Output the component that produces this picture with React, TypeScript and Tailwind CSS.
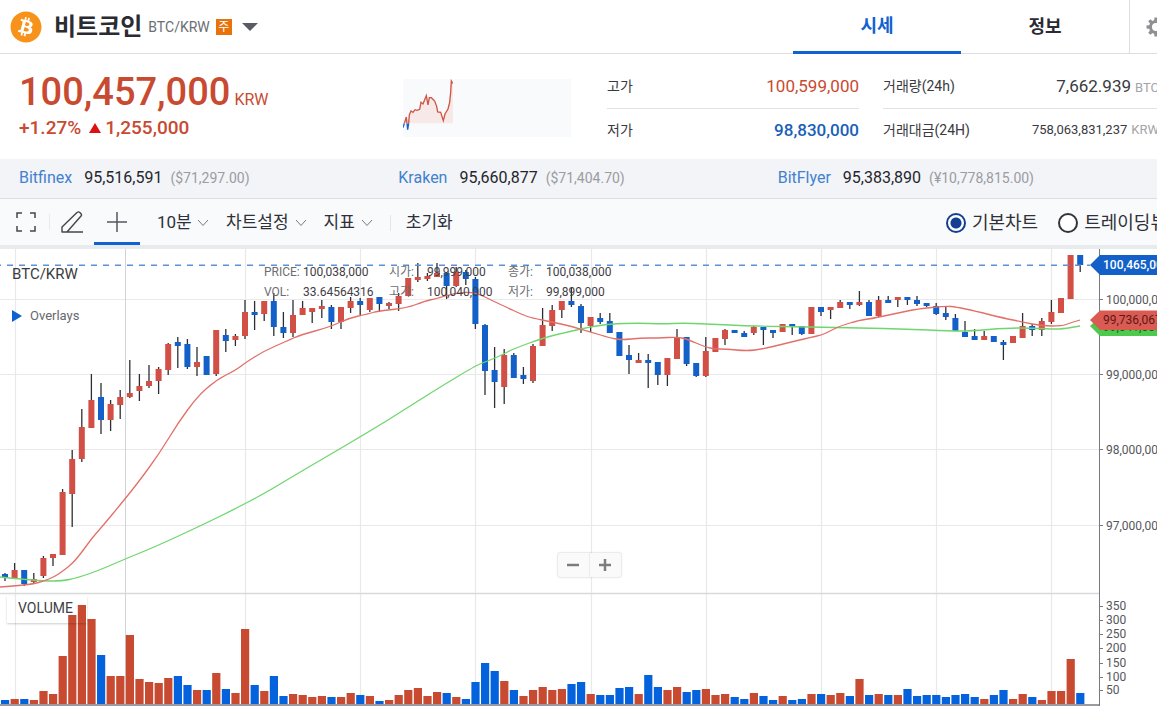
import { Fragment } from "react";
import { FaBitcoin } from "react-icons/fa";

// [rising, high, open/close top, open/close bottom, low, volume top, volume rising override]
type Candle = [number, number, number, number, number, number, number?];

const CANDLES: Candle[] = [
  [0, 573, 574, 578, 581, 700], [1, 563, 570, 578, 579, 699], [0, 570, 570, 584, 586, 699], [1, 573, 579, 582, 583, 700],
  [1, 556, 558, 576, 578, 691], [1, 554, 554, 558, 566, 694], [1, 489, 492, 555, 555, 656], [1, 450, 459, 494, 527, 615],
  [1, 409, 427, 459, 462, 605], [1, 374, 400, 428, 428, 619], [0, 383, 397, 420, 434, 655], [1, 400, 404, 420, 431, 676],
  [1, 390, 397, 405, 419, 676], [1, 360, 393, 397, 398, 635], [1, 374, 386, 391, 401, 679], [1, 365, 381, 386, 388, 682],
  [1, 367, 369, 381, 394, 683], [1, 343, 344, 370, 375, 678], [0, 337, 342, 346, 368, 676], [0, 339, 344, 367, 369, 685],
  [1, 347, 362, 367, 376, 690], [0, 356, 356, 375, 375, 690], [1, 330, 330, 374, 376, 673], [0, 329, 335, 341, 352, 689],
  [1, 334, 336, 340, 346, 693], [1, 300, 312, 336, 339, 629], [0, 301, 312, 315, 330, 685], [1, 301, 301, 314, 321, 691],
  [0, 293, 301, 327, 336, 676], [0, 312, 327, 333, 338, 696], [1, 300, 315, 333, 337, 694], [1, 301, 308, 315, 315, 695],
  [1, 308, 308, 312, 323, 697], [1, 300, 306, 309, 318, 696], [0, 305, 307, 322, 329, 697], [1, 307, 307, 322, 329, 697],
  [1, 297, 301, 308, 313, 693], [0, 298, 301, 305, 315, 695], [1, 298, 298, 310, 312, 696], [0, 297, 297, 304, 312, 701],
  [1, 302, 303, 306, 309, 700], [1, 293, 296, 304, 311, 695], [1, 278, 278, 296, 296, 690], [1, 263, 277, 280, 282, 688],
  [1, 273, 276, 279, 281, 696], [1, 263, 273, 277, 277, 692], [0, 272, 273, 286, 299, 693], [1, 267, 272, 286, 287, 697],
  [0, 270, 272, 279, 285, 699], [0, 277, 279, 324, 329, 682], [0, 324, 325, 371, 395, 663], [0, 347, 370, 382, 408, 671],
  [1, 349, 355, 387, 404, 681], [0, 353, 355, 378, 378, 690], [0, 367, 375, 379, 384, 696, 1], [1, 344, 346, 381, 383, 690],
  [1, 308, 325, 346, 346, 687], [1, 305, 310, 326, 331, 690], [1, 301, 301, 310, 318, 689], [0, 288, 301, 305, 307, 684],
  [0, 304, 306, 323, 333, 682], [1, 317, 317, 326, 332, 694], [0, 313, 318, 322, 324, 695], [0, 313, 321, 333, 333, 695],
  [0, 332, 332, 356, 356, 688], [0, 345, 355, 360, 374, 687], [1, 353, 360, 363, 363, 694], [0, 354, 360, 363, 388, 675],
  [0, 362, 362, 375, 385, 687], [1, 358, 358, 375, 386, 690], [1, 329, 337, 359, 359, 687], [0, 337, 337, 364, 366, 692],
  [0, 363, 363, 376, 377, 690], [1, 337, 351, 376, 377, 689], [1, 338, 338, 352, 352, 695], [1, 329, 330, 339, 345, 694],
  [0, 330, 330, 333, 333, 697], [0, 331, 333, 337, 337, 699], [1, 326, 327, 333, 335, 693], [0, 327, 327, 330, 345, 696],
  [0, 330, 330, 333, 338, 700], [1, 324, 324, 332, 332, 696], [0, 324, 324, 326, 335, 700], [0, 326, 326, 334, 335, 699],
  [1, 307, 307, 334, 334, 694], [0, 307, 307, 312, 316, 694], [1, 307, 307, 310, 319, 695], [1, 300, 302, 308, 308, 693],
  [0, 302, 302, 305, 309, 696], [1, 291, 302, 305, 306, 679], [0, 300, 302, 316, 316, 695], [1, 296, 300, 316, 317, 694],
  [0, 296, 300, 303, 303, 695], [1, 297, 297, 300, 307, 695], [0, 297, 297, 300, 305, 689], [0, 296, 300, 304, 306, 696],
  [0, 303, 303, 306, 307, 695], [0, 303, 306, 314, 315, 695], [0, 307, 313, 317, 320, 697], [0, 314, 318, 331, 331, 695],
  [0, 321, 332, 337, 337, 694], [0, 329, 336, 340, 340, 697], [1, 331, 336, 340, 340, 699], [0, 336, 336, 342, 342, 695],
  [0, 340, 342, 345, 360, 690], [1, 336, 336, 343, 343, 699], [1, 313, 326, 338, 338, 694], [0, 324, 326, 330, 336, 697],
  [1, 318, 321, 330, 336, 700], [1, 300, 312, 322, 324, 691], [1, 298, 298, 313, 313, 691], [1, 255, 255, 299, 299, 659],
  [0, 255, 255, 265, 272, 693],
];

const SHORT_AVERAGE =
  "0,587 14,586 33,584 44,581 54,577 63,571 73,563 82,552 92,538 101,528 125,499 140,480 159,454 178,423 197,397 216,380 236,370 245,363 264,351 287,341 300,335 330,327 349,318 368,314 378,311 407,308 425,301 435,299 455,293 475,292 495,302 504,306 523,315 532,318 552,322 570,326 591,332 610,338 622,340 640,338 658,338 677,337 687,339 705,347 715,349 725,349 747,351 763,349 783,344 812,337 822,335 830,331 840,326 860,320 870,319 898,313 917,309 946,306 956,307 975,311 1003,318 1023,322 1042,326 1062,326 1070,323 1080,320";
const LONG_AVERAGE =
  "0,577 20,579 45,581 62,581 77,578 100,570 125,559 157,546 200,526 233,510 267,492 290,478 372,430 407,408 437,389 475,366 485,362 500,356 513,349 543,338 563,333 590,327 610,324 638,323 663,324 683,323 705,324 730,325 750,326 812,327 860,328 907,329 950,331 970,331 1007,328 1030,328 1052,329 1062,329 1080,326";

// Rounds the corners of a polyline by running quadratic curves between segment midpoints.
function smooth(points: string) {
  const p = points.split(" ").map((s) => s.split(",").map(Number));
  const end = p[p.length - 1];
  const curves = p.slice(1, -1).map(([x, y], i) => {
    const [nx, ny] = p[i + 2];
    return `Q${x} ${y} ${(x + nx) / 2} ${(y + ny) / 2}`;
  });
  return `M${p[0][0]} ${p[0][1]}${curves.join("")}L${end[0]} ${end[1]}`;
}

const COLUMN_LINES = [15, 245, 360, 475, 591, 706, 821, 936, 1051];
const ROW_LINES = [300, 375, 450, 526];

const PRICE_TICKS: [number, string][] = [
  [300, "100,000,000"],
  [375, "99,000,000"],
  [450, "98,000,000"],
  [526, "97,000,000"],
];
const VOLUME_TICKS: [number, string][] = [
  [606, "350"], [620, "300"], [634, "250"], [648, "200"], [663, "150"], [677, "100"], [690, "50"],
];

const EXCHANGES = [
  { name: "Bitfinex", price: "95,516,591", local: "($71,297.00)" },
  { name: "Kraken", price: "95,660,877", local: "($71,404.70)" },
  { name: "BitFlyer", price: "95,383,890", local: "(¥10,778,815.00)" },
];

const TEETH = [0, 45, 90, 135, 180, 225, 270, 315];

function Header() {
  return (
    <header className="flex h-[54px] border-b border-[#dcdee1] bg-white">
      <div className="flex flex-1 items-center pl-[10px]">
        <FaBitcoin className="size-8 text-[#f7931a]" />
        <h1 className="ml-3 text-2xl font-bold text-[#2b2b33]">비트코인</h1>
        <span className="ml-1.5 text-sm text-[#6b6e73]">BTC/KRW</span>
        <span className="ml-1.5 flex size-4 items-center justify-center bg-[#e8720c] text-xs text-white">주</span>
        <button type="button" aria-label="코인 선택" className="ml-2.5">
          <svg className="h-2 w-4 fill-[#595c64]" viewBox="0 0 16 8">
            <path d="M0 0h16L8 8z" />
          </svg>
        </button>
      </div>
      <nav className="flex text-lg font-bold">
        <a href="#price" className="-mb-px flex w-[168px] items-center justify-center border-b-3 border-[#0f62cf] text-[#0f62cf]">
          시세
        </a>
        <a href="#info" className="flex w-[168px] items-center justify-center text-[#2b2b33]">
          정보
        </a>
      </nav>
      <button type="button" aria-label="설정" className="flex w-7 items-center overflow-hidden border-l border-[#dcdee1] pl-4">
        <svg className="size-5 shrink-0" viewBox="0 0 20 20">
          <circle cx="10" cy="10" r="5.5" fill="none" stroke="#8f9094" strokeWidth="3" />
          {TEETH.map((a) => (
            <path key={a} d="M8 4.500L8.500 .500h3L12 4.500z" fill="#8f9094" transform={`rotate(${a} 10 10)`} />
          ))}
        </svg>
      </button>
    </header>
  );
}

function Sparkline() {
  return (
    <svg className="h-[58px] w-[168px] shrink-0 bg-[#f9fafc]" viewBox="0 0 504 174">
      <path
        d="M4 133L10 114 17 133 19 108 24 96 30 100 36 92 42 94 50 91 54 70 60 75 70 50 75 78 79 56 85 56 95 66 101 82 104 99 113 100 121 125 126 105 135 90 140 70 143 40 145 6 150 12V133z"
        fill="#f7e9e7"
      />
      <path d="M0 146L4 133M12 133L14 152 17 133" fill="none" stroke="#0f62cf" strokeWidth="4" />
      <path
        d="M4 133L10 114 12 133M17 133L19 108 24 96 30 100 36 92 42 94 50 91 54 70 60 75 65 62 70 50 75 78 79 56 85 56 95 66 101 82 104 99 113 100 121 125 126 105 135 90 140 70 143 40 145 6 149 13"
        fill="none"
        stroke="#cf5544"
        strokeWidth="4"
      />
    </svg>
  );
}

function Summary() {
  return (
    <section className="flex h-[105px] bg-white pl-[19px]">
      <div className="w-96 shrink-0 pt-4 text-[#c84a31]">
        <p className="flex items-baseline gap-1 leading-11">
          <strong className="text-[38px] font-medium">100,457,000</strong>
          <span className="text-base">KRW</span>
        </p>
        <p className="flex items-center gap-2 text-[19px] leading-7 font-medium">
          <span>+1.27%</span>
          <svg className="h-[10px] w-3 fill-[#dd1111]" viewBox="0 0 12 10">
            <path d="M6 0l6 10H0z" />
          </svg>
          <span className="-ml-1">1,255,000</span>
        </p>
      </div>
      <div className="pt-[25px]">
        <Sparkline />
      </div>
      <dl className="-mr-0.5 ml-9 grid flex-1 grid-cols-[minmax(0,21fr)_minmax(0,23fr)] content-start gap-x-6 pt-[10px] text-sm whitespace-nowrap text-[#3a3a40]">
        <div className="flex h-[45px] items-center justify-between border-b border-[#e1e3e6]">
          <dt>고가</dt>
          <dd className="text-[17px] text-[#c84a31]">100,599,000</dd>
        </div>
        <div className="flex h-[45px] items-center justify-between border-b border-[#e1e3e6]">
          <dt>거래량(24h)</dt>
          <dd className="flex items-baseline gap-1 text-[17px]">
            7,662.939 <span className="text-[13px] text-[#a2a4a8]">BTC</span>
          </dd>
        </div>
        <div className="flex h-[42px] items-center justify-between">
          <dt>저가</dt>
          <dd className="text-[17px] font-medium text-[#1a5fb8]">98,830,000</dd>
        </div>
        <div className="flex h-[42px] items-center justify-between">
          <dt>거래대금(24H)</dt>
          <dd className="flex items-baseline gap-1 text-[13px]">
            758,063,831,237 <span className="text-[13px] text-[#a2a4a8]">KRW</span>
          </dd>
        </div>
      </dl>
    </section>
  );
}

function Exchanges() {
  return (
    <ul className="grid h-10 grid-cols-3 border-b border-[#dcdee1] bg-[#f2f4f8] pb-0.5 pl-[19px] whitespace-nowrap">
      {EXCHANGES.map((e) => (
        <li key={e.name} className="-mr-1 flex items-center">
          <a href={`#${e.name}`} className="text-base text-[#4381cf]">
            {e.name}
          </a>
          <span className="ml-3 text-base text-[#25262b]">{e.price}</span>
          <span className="ml-2 text-sm text-[#9b9ca1]">{e.local}</span>
        </li>
      ))}
    </ul>
  );
}

function Chevron() {
  return (
    <svg className="h-2 w-3" viewBox="0 0 12 8" fill="none" stroke="#77797f">
      <path d="M1 1l5 5.500L11 1" />
    </svg>
  );
}

function Toolbar() {
  return (
    <div className="flex h-[50px] items-stretch border-b-4 border-[#e8ebee] bg-[#f8fafc] text-[17px] whitespace-nowrap text-[#303138]">
      <button type="button" aria-label="전체화면" className="flex w-[50px] items-center justify-between pl-4">
        <svg className="size-5" viewBox="0 0 20 20" fill="none" stroke="#45464d" strokeWidth="1.500">
          <path d="M1 6V1h5M14 1h5v5M19 14v5h-5M6 19H1v-5" />
        </svg>
        <span className="h-4 w-px bg-[#e8eaed]" />
      </button>
      <button type="button" aria-label="그리기" className="flex w-11 items-center justify-center">
        <svg className="size-[22px]" viewBox="0 0 22 22" fill="none" stroke="#45464d" strokeWidth="1.400" strokeLinejoin="round">
          <path d="M1 21v-5L16 1.500c1-.800 2-.800 2.800 0l1 1c.900.900.900 1.900 0 2.800L6 21zM6 21h16" />
        </svg>
      </button>
      <button
        type="button"
        aria-label="십자선"
        className="flex w-[46px] items-center justify-center border-b-3 border-[#0f62cf] pt-[3px]"
      >
        <svg className="size-5" viewBox="0 0 20 20" fill="none" stroke="#55575d" strokeWidth="1.500">
          <path d="M10 0v20M0 10h20" />
        </svg>
      </button>
      <div className="flex items-center gap-[17px] pt-0.5 pl-[17px]">
        <label className="relative flex items-center">
          <select aria-label="봉 간격" className="w-[52px] appearance-none bg-transparent">
            <option>10분</option>
          </select>
          <span className="pointer-events-none absolute right-0">
            <Chevron />
          </span>
        </label>
        <button type="button" className="flex items-center gap-1.5">
          차트설정
          <Chevron />
        </button>
        <button type="button" className="flex items-center gap-1.5">
          지표
          <Chevron />
        </button>
        <span className="h-4 w-px bg-[#e3e5e8]" />
        <button type="button" className="-ml-0.5">
          초기화
        </button>
      </div>
      <fieldset className="-mr-2.5 ml-auto flex items-center gap-5 pt-0.5 text-lg">
        <label className="flex items-center gap-1.5">
          <input
            type="radio"
            name="chart"
            defaultChecked
            className="size-5 appearance-none rounded-full border-2 border-[#33343a] bg-white checked:border-[#123f94] checked:bg-[radial-gradient(circle,#123f94_5px,#fff_6px)]"
          />
          기본차트
        </label>
        <label className="flex items-center gap-1.5">
          <input
            type="radio"
            name="chart"
            className="size-5 appearance-none rounded-full border-2 border-[#33343a] bg-white checked:border-[#123f94] checked:bg-[radial-gradient(circle,#123f94_5px,#fff_6px)]"
          />
          트레이딩뷰
        </label>
      </fieldset>
    </div>
  );
}

function Plot() {
  return (
    <svg className="block h-[457px] w-full" viewBox="0 249 1099 457" preserveAspectRatio="none">
      <g stroke="#e9e9ec" strokeWidth="1.200">
        {COLUMN_LINES.map((x) => (
          <path key={x} d={`M${x + 0.5} 249V704`} />
        ))}
        {ROW_LINES.map((y) => (
          <path key={y} d={`M0 ${y - 0.5}H1099`} />
        ))}
      </g>
      <path d="M125.500 249V704" stroke="#d2d3d6" />
      <path d="M0 593.500H1099" stroke="#d8d9dc" strokeWidth="1.500" />
      {CANDLES.map(([up, high, top, bottom, low, vol, volUp], i) => {
        const x = 5 + i * 9.6;
        return (
          <g key={i}>
            <path d={`M${x} ${high}V${low}`} stroke="#2c2f36" strokeWidth="1.300" />
            <rect x={x - 3} y={top} width="6" height={bottom - top} fill={up ? "#d24f45" : "#1260c8"} />
            <rect x={x - 4} y={vol} width="8.200" height={704 - vol} fill={volUp ?? up ? "#c84a31" : "#0462dd"} />
          </g>
        );
      })}
      <path d={smooth(LONG_AVERAGE)} fill="none" stroke="#6fd66f" strokeWidth="1.300" />
      <path d={smooth(SHORT_AVERAGE)} fill="none" stroke="#e27069" strokeWidth="1.300" />
      <path d="M-5 265.200H1090" stroke="#5c8fd6" strokeWidth="1.500" strokeDasharray="6 6" />
      <path d="M0 705H1099" stroke="#9a9ba0" strokeWidth="2" />
    </svg>
  );
}

function Axis() {
  return (
    <svg className="block h-[457px] w-[58px] shrink-0 overflow-visible text-xs" viewBox="0 249 58 457" fill="#55575c">
      <path d="M.500 249V706" stroke="#77797e" />
      {PRICE_TICKS.map(([y, label]) => (
        <Fragment key={label}>
          <path d={`M0 ${y - 0.5}h4`} stroke="#77797e" />
          <text x="7" y={y + 4}>{label}</text>
        </Fragment>
      ))}
      {VOLUME_TICKS.map(([y, label]) => (
        <Fragment key={label}>
          <path d={`M0 ${y + 0.5}h4`} stroke="#77797e" />
          <text x="7" y={y + 4}>{label}</text>
        </Fragment>
      ))}
      <path d="M-9 326L1 317H60V336H1z" fill="#4dc94d" />
      <text x="4" y="331" fill="#1d5a1d">99,641,000</text>
      <path d="M-9 320L1 310.500H60V330H1z" fill="#d95b53" />
      <text x="4" y="324" fill="#5f1815">99,736,067</text>
      <path d="M-9 265L1 255H60V275H1z" fill="#1260c8" />
      <text x="4" y="269" fill="#fff" fontWeight="500">100,465,000</text>
    </svg>
  );
}

const READOUT = [
  ["PRICE:", "100,038,000", "시가:", "99,999,000", "종가:", "100,038,000"],
  ["VOL:", "33.64564316", "고가:", "100,040,000", "저가:", "99,899,000"],
];

function Chart() {
  return (
    <section className="relative flex bg-white">
      <div className="min-w-0 flex-1">
        <Plot />
      </div>
      <Axis />
      <div className="absolute top-[15px] left-3">
        <h2 className="text-[15px] leading-5 text-[#3a3b40]">BTC/KRW</h2>
        <button type="button" className="mt-[22px] flex items-center gap-2 text-[13px] leading-5 text-[#66686d]">
          <svg className="h-3 w-2.5 fill-[#0f62cf]" viewBox="0 0 10 12">
            <path d="M0 0l10 6-10 6z" />
          </svg>
          Overlays
        </button>
      </div>
      <dl className="absolute top-[13px] left-[264px] grid grid-cols-[39px_86px_38px_81px_38px_auto] text-xs leading-5 whitespace-nowrap">
        {READOUT.flat().map((t, i) =>
          i % 2 === 0 ? (
            <dt key={i} className="text-[#6b6d72]">{t}</dt>
          ) : (
            <dd key={i} className="text-[#3f4046]">{t}</dd>
          ),
        )}
      </dl>
      <div className="absolute top-[304px] left-1/2 -ml-[21px] flex h-6 divide-x divide-[#ececee] rounded-xs bg-[#fafafa] shadow-[0_0_2px_rgba(0,0,0,0.3)]">
        <button type="button" aria-label="축소" className="flex w-8 items-center justify-center">
          <svg className="size-3" viewBox="0 0 12 12" stroke="#7b7c80" strokeWidth="2.500">
            <path d="M0 6h12" />
          </svg>
        </button>
        <button type="button" aria-label="확대" className="flex w-[31px] items-center justify-center">
          <svg className="size-3" viewBox="0 0 12 12" stroke="#7b7c80" strokeWidth="2.500">
            <path d="M0 6h12M6 0v12" />
          </svg>
        </button>
      </div>
      <h3 className="absolute top-[347px] left-[7px] h-[27px] w-20 pl-[11px] text-sm leading-6 text-[#3f4046] shadow-[0_1px_2px_rgba(0,0,0,0.2)]">
        VOLUME
      </h3>
    </section>
  );
}

export default function App() {
  return (
    <main className="overflow-hidden bg-white font-[Roboto,'Noto_Sans_CJK_KR',sans-serif]">
      <Header />
      <Summary />
      <Exchanges />
      <Toolbar />
      <Chart />
    </main>
  );
}
